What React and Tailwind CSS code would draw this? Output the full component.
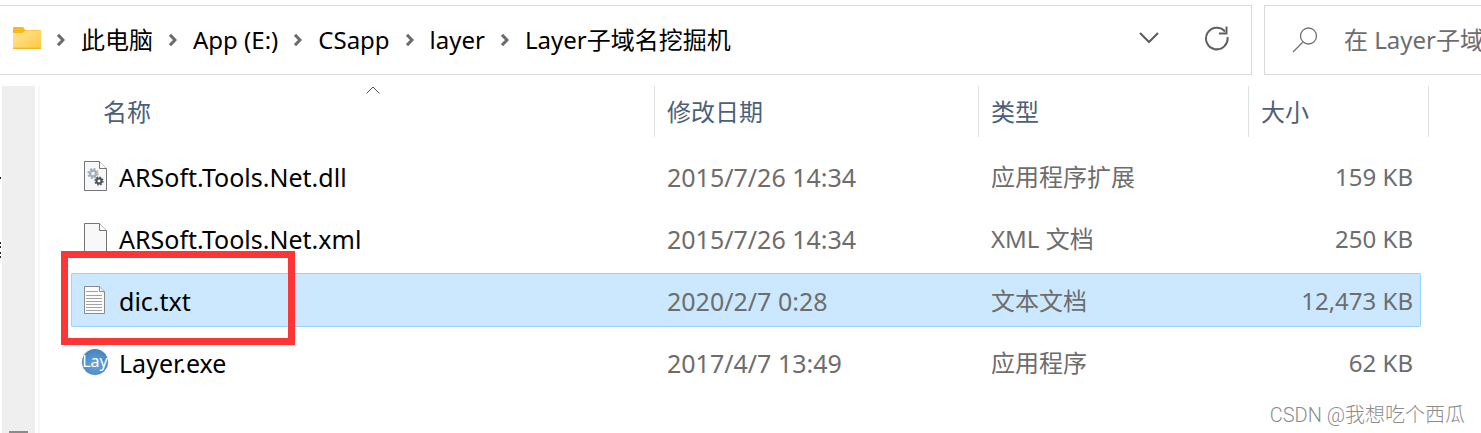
const files = [
  { name: "ARSoft.Tools.Net.dll", date: "2015/7/26 14:34", type: "应用程序扩展", size: "159 KB", icon: "dll" },
  { name: "ARSoft.Tools.Net.xml", date: "2015/7/26 14:34", type: "XML 文档", size: "250 KB", icon: "blank" },
  { name: "dic.txt", date: "2020/2/7 0:28", type: "文本文档", size: "12,473 KB", icon: "text", selected: true },
  { name: "Layer.exe", date: "2017/4/7 13:49", type: "应用程序", size: "62 KB", icon: "exe" },
];

const crumbs = ["此电脑", "App (E:)", "CSapp", "layer", "Layer子域名挖掘机"];

const FolderIcon = () => (
  <svg width="28" height="24" viewBox="0 0 28 24" className="mb-1 shrink-0">
    <defs>
      <linearGradient id="folder" x1="0" y1="0" x2="1" y2="1">
        <stop offset="0" stopColor="#ffe59b" />
        <stop offset="1" stopColor="#ffc93c" />
      </linearGradient>
    </defs>
    <path d="M0 8V2a1 1 0 0 1 1-1h9l2.500 3H27a1 1 0 0 1 1 1v4H0z" fill="#fbb917" />
    <path d="M0 7h9.500l3-2.500H28V22a1 1 0 0 1-1 1H1a1 1 0 0 1-1-1z" fill="url(#folder)" />
    <path d="M0 22.300h28" stroke="#eeb02c" strokeWidth="1.200" />
  </svg>
);

const CrumbArrow = () => (
  <svg width="8" height="14" viewBox="0 0 8 14" className="shrink-0" fill="none" stroke="#6b6b6b" strokeWidth="3">
    <path d="M1 1.800 6 7l-5 5.200" />
  </svg>
);

const Gear = ({ cx, cy, r, color }) => (
  <g fill="none" stroke={color}>
    <circle cx={cx} cy={cy} r={r * 0.55} strokeWidth={r * 0.45} />
    <circle cx={cx} cy={cy} r={r * 0.85} strokeWidth={r * 0.35} strokeDasharray={`${r * 0.36} ${r * 0.3075}`} />
  </g>
);

const FileIcon = ({ kind }) => {
  if (kind === "exe") {
    return (
      <svg width="28" height="32" viewBox="0 0 28 32" className="shrink-0">
        <defs>
          <radialGradient id="ball" cx="0.5" cy="0.6" r="0.6">
            <stop offset="0" stopColor="#6aa5dc" />
            <stop offset="1" stopColor="#4383c3" />
          </radialGradient>
        </defs>
        <circle cx="14" cy="15" r="13.500" fill="none" stroke="#dddddd" strokeWidth="1" strokeDasharray="1 4" />
        <circle cx="14" cy="15" r="13" fill="url(#ball)" />
        <text x="14" y="20" textAnchor="middle" fontFamily="Noto Sans, sans-serif" fontSize="16" fill="#ffffff">
          Lay
        </text>
      </svg>
    );
  }
  if (kind === "text") {
    return (
      <svg width="28" height="32" viewBox="0 0 28 32" className="shrink-0">
        <path d="M3.500 1.500H18.500l5 5v22h-20z" fill="#fbfbfb" stroke="#8a8a8a" />
        <path d="M18.500 1.500v5h5" fill="#eeeeee" stroke="#8a8a8a" />
        <path d="M5 6.500h12M5 10.500h16M5 13.500h16M5 16.500h16M5 19.500h16M5 22.500h16M5 25.500h16" stroke="#a3a3a3" />
      </svg>
    );
  }
  return (
    <svg width="28" height="32" viewBox="0 0 28 32" className="shrink-0">
      <path d="M3.500 .5H18.500l7 7v22h-22z" fill="#f8f8f8" stroke="#757575" />
      <path d="M18.500 .5v7h7" fill="#ffffff" stroke="#757575" />
      {kind === "dll" && (
        <>
          <Gear cx={12} cy={12.5} r={5.5} color="#a5b0ba" />
          <Gear cx={18} cy={20} r={4.5} color="#4b5559" />
        </>
      )}
    </svg>
  );
};

const AddressBar = () => (
  <header className="flex gap-3 pt-[5px]">
    <nav aria-label="路径" className="flex h-[70px] min-w-0 flex-1 items-center border border-l-0 border-[#d9d9d9] pr-[21px] pl-[13px]">
      <FolderIcon />
      <ol className="flex items-center">
        {crumbs.map((crumb) => (
          <li key={crumb} className="flex items-center gap-4 pl-4 whitespace-nowrap">
            <CrumbArrow />
            <a href="#" className="text-black">{crumb}</a>
          </li>
        ))}
      </ol>
      <button type="button" aria-label="以前的位置" className="mb-1 ml-auto pr-11">
        <svg width="22" height="14" viewBox="0 0 22 14" fill="none" stroke="#606060" strokeWidth="2.200">
          <path d="m2 2 9 9 9-9" />
        </svg>
      </button>
      <button type="button" aria-label="刷新" className="mb-1">
        <svg width="26" height="26" viewBox="0 0 26 26" fill="none" stroke="#606060" strokeWidth="2">
          <path d="M23.500 12A10.800 10.800 0 1 1 21 6.500" />
          <path d="M22.500 1.500v7h-7.500" />
        </svg>
      </button>
    </nav>
    <label className="flex h-[70px] w-[217px] items-center gap-[26px] border border-r-0 border-[#d9d9d9] pl-[27px]">
      <svg width="26" height="26" viewBox="0 0 26 26" className="shrink-0" fill="none" stroke="#707070" strokeWidth="1.300">
        <circle cx="16.500" cy="9" r="8" />
        <path d="M11 15 1 25" />
      </svg>
      <input
        type="text"
        aria-label="搜索"
        placeholder="在 Layer子域名挖掘机 中搜索"
        className="min-w-0 flex-1 outline-none placeholder:text-[#6d6d6d]"
      />
    </label>
  </header>
);

const HeaderCell = ({ children }) => (
  <th scope="col" className="p-0 text-left align-top font-normal text-[#4c607a]">
    <div className="flex h-[51px] items-center border-r border-[#e0e0e0] pt-px pl-3">{children}</div>
  </th>
);

const FileRow = ({ file }) => {
  const cell = file.selected
    ? "h-[54px] border-y border-[#99d1ff] bg-[#cce8ff] p-0 pt-0.5"
    : "h-[54px] border-y border-transparent p-0 pt-0.5";

  return (
    <tr aria-selected={Boolean(file.selected)} className="text-[#6d6d6d]">
      <td className={`${cell} relative rounded-l-xs border-l text-[25px] leading-8 text-black`}>
        <div className="flex items-center gap-[10px] pl-[9px]">
          <FileIcon kind={file.icon} />
          <span>{file.name}</span>
        </div>
        {file.selected && (
          <div className="absolute -top-[23px] -left-[11px] h-[94px] w-[234px] border-[7px] border-[#fc3636]" />
        )}
      </td>
      <td className={`${cell} pl-3 text-[25px] leading-8`}>{file.date}</td>
      <td className={`${cell} pl-3`}>{file.type}</td>
      <td className={`${cell} rounded-r-xs border-r pr-[7px] text-right`}>{file.size}</td>
      <td className="p-0" />
    </tr>
  );
};

const FileTable = () => (
  <table className="w-full table-fixed border-separate border-spacing-x-0 border-spacing-y-2">
    <colgroup>
      <col />
      <col className="w-[324px]" />
      <col className="w-[270px]" />
      <col className="w-[172px]" />
      <col className="w-2" />
    </colgroup>
    <thead>
      <tr className="h-[55px]">
        <th scope="col" aria-sort="ascending" className="p-0 text-left align-top font-normal text-[#4c607a]">
          <div className="relative ml-5 flex h-[51px] items-center border-r border-[#e0e0e0] pt-px pl-3">
            <svg width="14" height="8" viewBox="0 0 14 8" className="absolute top-0 left-1/2 -translate-x-1/2" fill="none" stroke="#555555">
              <path d="m.5 7.500 6.500-6.500 6.500 6.500" />
            </svg>
            名称
          </div>
        </th>
        <HeaderCell>修改日期</HeaderCell>
        <HeaderCell>类型</HeaderCell>
        <th scope="col" className="p-0 text-left align-top font-normal text-[#4c607a]">
          <div className="flex h-[51px] items-center pt-px pl-3">大小</div>
        </th>
        <td className="p-0 align-top">
          <div className="h-[51px] border-r border-[#e0e0e0]" />
        </td>
      </tr>
    </thead>
    <tbody>
      {files.map((file) => (
        <FileRow key={file.name} file={file} />
      ))}
    </tbody>
  </table>
);

export default function App() {
  return (
    <div className="relative flex min-h-screen flex-col overflow-hidden bg-white font-['Noto_Sans','Noto_Sans_CJK_SC',sans-serif] text-2xl">
      <AddressBar />
      <div className="flex flex-1">
        {/* clipped edge of the navigation tree */}
        <svg width="2" height="200" viewBox="0 0 2 200" className="shrink-0" fill="#222222">
          <path d="M0 102h1v2H0zM0 167h1v2H0zM0 171h1v2H0zM0 177h1v2H0zM0 181h1v2H0z" />
        </svg>
        <div className="mt-[11px] flex w-[33px] shrink-0 flex-col justify-end bg-[#efefef] px-[7px]">
          <div className="h-0.5 bg-[#8a8a8a]" />
        </div>
        <div className="mt-[11px] ml-[3px] w-0.5 shrink-0 bg-[#f7f7f7]" />
        <main className="min-w-0 flex-1 pt-[3px] pr-[52px] pl-[31px]">
          <FileTable />
        </main>
      </div>
      <div className="absolute right-4 bottom-1 font-['Roboto','Noto_Sans_CJK_SC',sans-serif] text-xl font-light text-[#8c8c8c]">
        CSDN @我想吃个西瓜
      </div>
    </div>
  );
}
